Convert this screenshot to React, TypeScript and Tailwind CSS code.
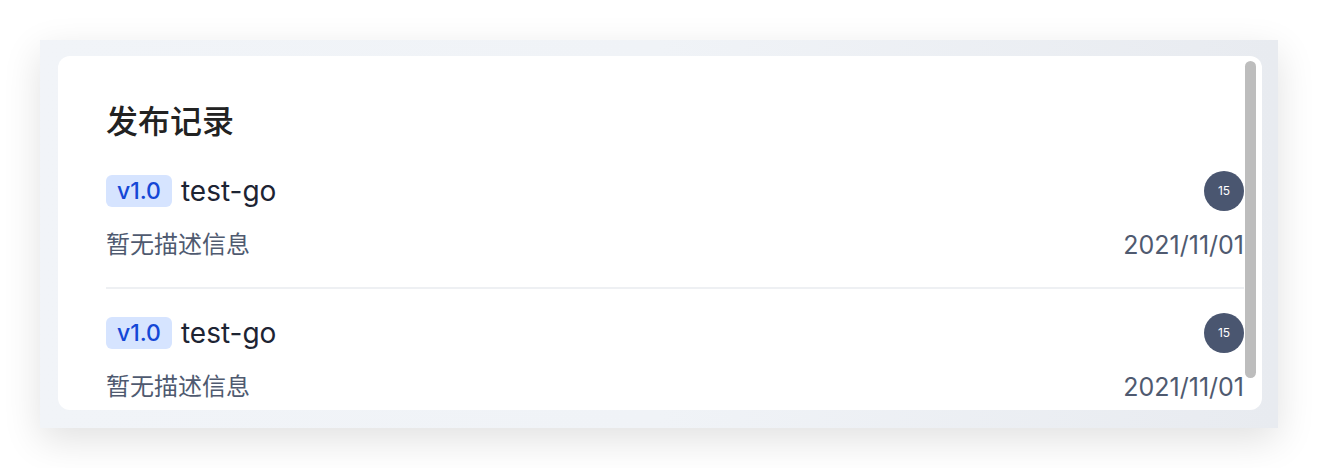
const records = [
  { version: "v1.0", name: "test-go", desc: "暂无描述信息", count: 15, date: "2021/11/01" },
  { version: "v1.0", name: "test-go", desc: "暂无描述信息", count: 15, date: "2021/11/01" },
];

export default function App() {
  return (
    <div className="w-[1318px] h-[468px] bg-white p-10 font-['Inter','Noto_Sans_CJK_SC',sans-serif]">
      <div className="w-[1238px] h-[388px] pt-4 pl-[18px] pr-4 pb-[18px] bg-gradient-to-r from-[#f1f4f8] via-[#f0f3f7] to-[#e8ebf0] shadow-[0_12px_36px_rgba(0,0,0,0.12)]">
        <div className="relative h-full rounded-xl bg-white overflow-hidden">
          <div className="pl-12 pr-[18px] pt-12">
            <h2 className="text-[32px] leading-9 font-medium text-[#222222] mb-[7px]">发布记录</h2>
            {records.map((r, i) => (
              <Record key={i} {...r} />
            ))}
          </div>
          <div className="absolute right-[6px] top-[5px] w-[11px] h-[317px] rounded-full bg-[#bdbdbd]" />
        </div>
      </div>
    </div>
  );
}

function Record({ version, name, desc, count, date }: { version: string; name: string; desc: string; count: number; date: string }) {
  return (
    <div className="pt-6 pb-[26px] border-b-2 border-[#eef0f3] last:border-b-0">
      <div className="flex items-center justify-between h-10">
        <div className="flex items-center">
          <span className="h-8 px-[11px] rounded-md bg-[#d6e4ff] text-[#1447d6] text-[23px] font-medium leading-8">{version}</span>
          <span className="ml-[9px] text-[28px] leading-8 text-[#1d2433]">{name}</span>
        </div>
        <div className="w-10 h-10 rounded-full bg-[#4a5670] text-white text-[12px] flex items-center justify-center">{count}</div>
      </div>
      <div className="mt-[18px] flex items-center justify-between text-[24px] leading-8 text-[#4f5a70]">
        <span>{desc}</span>
        <span className="text-[25px]">{date}</span>
      </div>
    </div>
  );
}
